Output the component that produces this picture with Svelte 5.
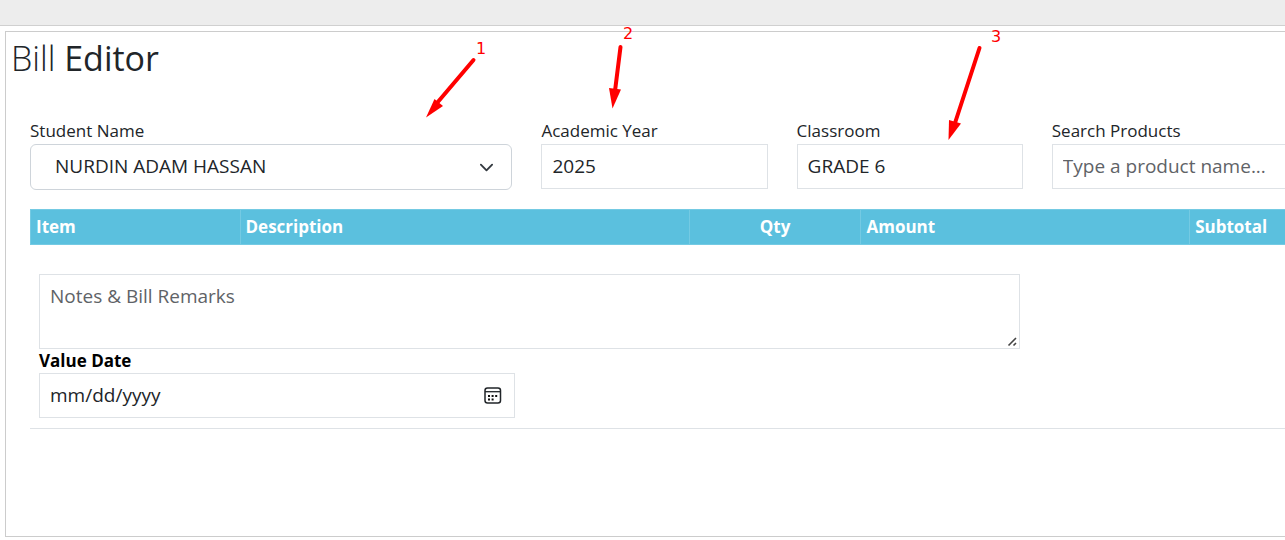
<script>
  let student = $state('NURDIN ADAM HASSAN');
  let year = $state('2025');
  let classroom = $state('GRADE 6');
  let search = $state('');
  let notes = $state('');
  let valueDate = $state('');
</script>

<div class="topbar"></div>
<main class="panel">
  <h1>Bill <span>Editor</span></h1>

  <form class="editor">
    <div class="fields">
      <div class="field">
        <label for="student">Student Name</label>
        <select id="student" class="control" bind:value={student}>
          <option>NURDIN ADAM HASSAN</option>
        </select>
      </div>
      <div class="field">
        <label for="year">Academic Year</label>
        <input id="year" class="control" type="text" bind:value={year} />
      </div>
      <div class="field">
        <label for="classroom">Classroom</label>
        <input id="classroom" class="control" type="text" bind:value={classroom} />
      </div>
      <div class="field">
        <label for="search">Search Products</label>
        <input id="search" class="control open" type="text" placeholder="Type a product name..." bind:value={search} />
      </div>
    </div>

    <table>
      <colgroup>
        <col class="c-item" /><col class="c-desc" /><col class="c-qty" /><col class="c-amount" /><col />
      </colgroup>
      <thead>
        <tr>
          <th scope="col">Item</th>
          <th scope="col">Description</th>
          <th scope="col" class="center">Qty</th>
          <th scope="col">Amount</th>
          <th scope="col">Subtotal</th>
        </tr>
      </thead>
    </table>

    <div class="details">
      <textarea class="control" aria-label="Notes &amp; Bill Remarks" placeholder="Notes &amp; Bill Remarks" bind:value={notes}></textarea>
      <label class="strong" for="value-date">Value Date</label>
      <div class="date">
        <input id="value-date" class="control" type="date" bind:value={valueDate} />
        <svg viewBox="0 0 18 18" width="18" height="18" aria-hidden="true">
          <rect x="1" y="1" width="15.5" height="15" rx="2.5" fill="none" stroke="#212529" stroke-width="1.5" />
          <path d="M1 4.700h15.500" stroke="#212529" stroke-width="1.3" />
          <path d="M4 8h2v2H4zM7.600 8h2v2h-2zM11.200 8h2v2h-2zM4 11.500h2v2H4zM7.600 11.500h2v2h-2z" fill="#111" />
        </svg>
      </div>
    </div>
    <hr />
  </form>
</main>

<svg class="marks" width="600" height="124" viewBox="420 20 600 124" aria-hidden="true">
  <g stroke="#f00" stroke-width="4" stroke-linecap="round">
    <path d="M473.5 60 437 103" />
    <path d="M620.5 47 615 91" />
    <path d="M979.5 48 955 123" />
  </g>
  <g fill="#f00">
    <path d="M426 117.500 434.500 99 443 106z" />
    <path d="M612.500 108.500 609 88 621 89.500z" />
    <path d="M948.500 140 949 120 961 123.500z" />
  </g>
  <g fill="#f00" class="digits">
    <text x="476" y="54">1</text>
    <text x="623" y="39">2</text>
    <text x="991" y="42">3</text>
  </g>
</svg>

<style>
  :global(body) {
    background: #fff;
    color: #212529;
    font: 17px/24px 'Open Sans', 'Noto Sans', sans-serif;
    overflow-x: hidden;
  }
  .topbar {
    height: 25px;
    background: #ededed;
    border-bottom: 1px solid #d0d0d0;
  }
  .panel {
    box-sizing: border-box;
    min-height: 506px;
    margin: 5px 0 3px 5px;
    padding: 0 0 0 5px;
    border: 1px solid #ccc;
    border-right: 0;
  }
  h1 {
    margin: 0;
    font-size: 34px;
    line-height: 52px;
    font-weight: 300;
  }
  h1 span { font-weight: 400; }
  .editor { padding: 35px 0 0 19px; }
  .fields {
    display: grid;
    grid-template-columns: 482fr 226fr 226fr 233fr;
    column-gap: 29px;
    align-items: start;
  }
  .field {
    display: flex;
    flex-direction: column;
    gap: 1px;
    min-width: 0;
  }
  .control {
    box-sizing: border-box;
    display: block;
    width: 100%;
    height: 45px;
    margin: 0;
    padding: 0 10px 2px;
    border: 1px solid #dee2e6;
    border-radius: 0;
    background: #fff;
    color: #212529;
    font: inherit;
    font-size: 19px;
    outline: 0;
  }
  .control::placeholder {
    color: #5f6367;
    opacity: 1;
  }
  .open { border-right: 0; }
  select.control {
    height: 46px;
    padding: 0 24px 2px;
    border-color: #ced4da;
    border-radius: 6px;
    appearance: none;
    background: url("data:image/svg+xml,%3Csvg xmlns='http://www.w3.org/2000/svg' viewBox='0 0 16 16'%3E%3Cpath fill='none' stroke='%23343a40' stroke-linecap='round' stroke-linejoin='round' stroke-width='2' d='m2 5 6 6 6-6'/%3E%3C/svg%3E") no-repeat right 17px center / 15px 15px;
  }
  table {
    width: 100%;
    margin-top: 19px;
    table-layout: fixed;
    border-collapse: collapse;
  }
  th {
    height: 35px;
    box-sizing: border-box;
    padding: 0 5px;
    border: 1px solid #74cae3;
    background: #5bc0de;
    color: #fff;
    font-weight: 700;
    text-align: left;
  }
  th:last-child { border-right: 0; }
  .c-item { width: 16.7%; }
  .c-desc { width: 35.8%; }
  .c-qty { width: 13.7%; }
  .c-amount { width: 26.2%; }
  .center { text-align: center; }
  .details {
    display: flex;
    flex-direction: column;
    padding: 29px 0 10px 9px;
  }
  textarea.control {
    width: 78.7%;
    height: 75px;
    padding: 7px 10px;
    line-height: 28px;
    resize: vertical;
  }
  textarea::-webkit-resizer {
    background: url("data:image/svg+xml,%3Csvg xmlns='http://www.w3.org/2000/svg' viewBox='0 0 15 15'%3E%3Cpath fill='none' stroke='%23444' stroke-width='1.6' d='M4.500 12.500l7.500-7.500M9.500 12.500l2.500-2.500'/%3E%3C/svg%3E") no-repeat center / 15px 15px;
  }
  .strong {
    color: #000;
    font-weight: 700;
  }
  .date {
    display: grid;
    align-items: center;
    width: 38.2%;
  }
  .date > * { grid-area: 1 / 1; }
  .date svg {
    justify-self: end;
    margin-right: 13px;
    pointer-events: none;
  }
  input[type='date']::-webkit-calendar-picker-indicator { opacity: 0; }
  input[type='date']::-webkit-datetime-edit-month-field,
  input[type='date']::-webkit-datetime-edit-day-field,
  input[type='date']::-webkit-datetime-edit-year-field { padding: 0; }
  hr {
    margin: 0;
    border: 0;
    border-top: 1px solid #dee2e6;
  }
  .marks {
    position: absolute;
    left: 420px;
    top: 20px;
    pointer-events: none;
  }
  .digits { font: 16px 'DejaVu Sans', sans-serif; }
</style>
